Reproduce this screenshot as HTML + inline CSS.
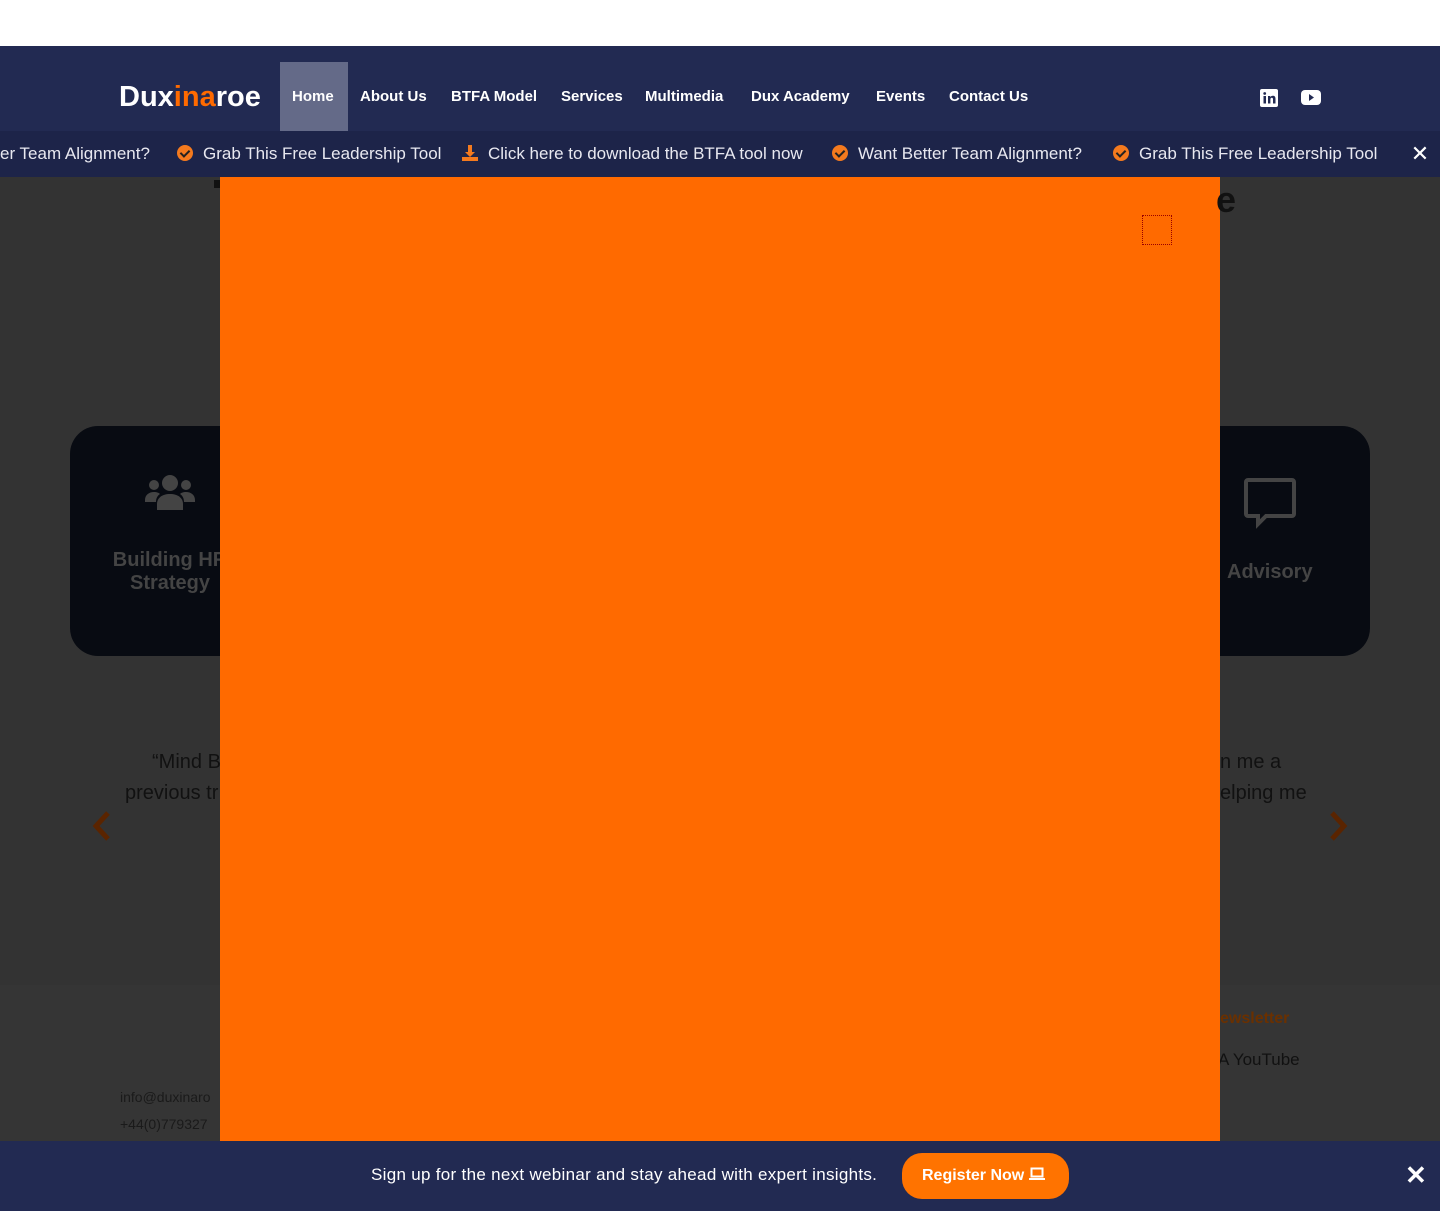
<!DOCTYPE html>
<html><head><meta charset="utf-8"><style>
*{margin:0;padding:0;box-sizing:border-box}
body{width:1440px;height:1211px;overflow:hidden;background:#333;font-family:"Liberation Sans",sans-serif;position:relative}
.a{position:absolute}
.top{left:0;top:0;width:1440px;height:46px;background:#fff}
.nav{left:0;top:46px;width:1440px;height:85px;background:#222a52}
.logo{left:119px;top:81px;font-size:29px;font-weight:bold;color:#fff;letter-spacing:0px}
.logo span{color:#ff6a00}
.home{left:280px;top:62px;width:68px;height:69px;background:#646a88}
.nl{top:88px;color:#fff;font-size:15px;font-weight:bold}
.tick{left:0;top:131px;width:1440px;height:46px;background:#1d2449;color:#e8e8f0;font-size:17px}
.tick .t{position:absolute;top:13px;white-space:nowrap}
.ic{display:inline-block;width:16px;height:16px;border-radius:50%;background:#f47a1e;vertical-align:-2px;margin-right:10px;position:relative}
.ic:after{content:"";position:absolute;left:5px;top:3px;width:4px;height:7px;border:solid #222;border-width:0 2px 2px 0;transform:rotate(45deg)}
.card{top:426px;height:230px;background:#080b12;border-radius:28px}
.ct{color:#444;font-size:20px;font-weight:bold;text-align:center}
.q{color:#111;font-size:20px}
.modal{left:220px;top:177px;width:1000px;height:964px;background:#ff6a00}
.bot{left:0;top:1141px;width:1440px;height:70px;background:#222a52}
</style></head><body>
<div class="a top"></div>
<div class="a" style="left:0;top:985px;width:1440px;height:156px;background:#353535"></div>
<div class="a nav"></div>
<div class="a home"></div>
<div class="a logo">Dux<span>ina</span>roe</div>
<div class="a nl" style="left:292px">Home</div>
<div class="a nl" style="left:360px">About Us</div>
<div class="a nl" style="left:451px">BTFA Model</div>
<div class="a nl" style="left:561px">Services</div>
<div class="a nl" style="left:645px">Multimedia</div>
<div class="a nl" style="left:751px">Dux Academy</div>
<div class="a nl" style="left:876px">Events</div>
<div class="a nl" style="left:949px">Contact Us</div>
<svg class="a" style="left:1260px;top:89px" width="18" height="18" viewBox="0 0 18 18"><rect width="18" height="18" rx="2" fill="#fff"/><rect x="3.5" y="7" width="2.5" height="7.5" fill="#222a52"/><circle cx="4.7" cy="4.5" r="1.4" fill="#222a52"/><path d="M8 7h2.3v1.2c.5-.8 1.4-1.4 2.6-1.4 2 0 2.6 1.3 2.6 3.2v4.5H13v-4c0-1-.2-1.7-1.2-1.7s-1.4.7-1.4 1.7v4H8z" fill="#222a52"/></svg>
<svg class="a" style="left:1301px;top:90px" width="20" height="15" viewBox="0 0 20 15"><rect width="20" height="15" rx="4" fill="#fff"/><path d="M8 4l5 3.5-5 3.5z" fill="#222a52"/></svg>
<div class="a tick">
<div class="t" style="left:0">er Team Alignment?</div>
<div class="t" style="left:177px"><span class="ic"></span>Grab This Free Leadership Tool</div>
<div class="t" style="left:462px"><svg width="16" height="16" viewBox="0 0 16 16" style="vertical-align:-2px;margin-right:10px"><path d="M6 0h4v7h3l-5 5-5-5h3z" fill="#f47a1e"/><rect x="0" y="12" width="16" height="4" fill="#f47a1e"/></svg>Click here to download the BTFA tool now</div>
<div class="t" style="left:832px"><span class="ic"></span>Want Better Team Alignment?</div>
<div class="t" style="left:1113px"><span class="ic"></span>Grab This Free Leadership Tool</div>
<div style="position:absolute;left:1400px;top:0;width:40px;height:46px;background:#1d2449;color:#fff;font-size:22px;text-align:center;line-height:46px">✕</div>
</div>
<div class="a card" style="left:70px;width:300px"></div>
<div class="a card" style="left:1070px;width:300px"></div>
<svg class="a" style="left:145px;top:474px" width="50" height="36" viewBox="0 0 50 36"><circle cx="25" cy="9" r="8" fill="#444"/><circle cx="9" cy="11" r="5" fill="#444"/><circle cx="41" cy="11" r="5" fill="#444"/><path d="M12 36v-6c0-6 5-10 13-10s13 4 13 10v6z" fill="#444"/><path d="M0 26c0-5 4-8 9-8 3 0 5 1 6 2-3 2-4 5-4 8H0z" fill="#444"/><path d="M50 26c0-5-4-8-9-8-3 0-5 1-6 2 3 2 4 5 4 8h11z" fill="#444"/></svg>
<div class="a ct" style="left:70px;top:549px;width:200px">Building HR<br>Strategy</div>
<svg class="a" style="left:1244px;top:478px" width="52" height="52" viewBox="0 0 52 52"><path d="M4 2h44a2 2 0 0 1 2 2v32a2 2 0 0 1-2 2H22l-8 8v-8H4a2 2 0 0 1-2-2V4a2 2 0 0 1 2-2z" fill="none" stroke="#444" stroke-width="4"/></svg>
<div class="a ct" style="left:1227px;top:561px">Advisory</div>
<div class="a q" style="left:152px;top:751px">“Mind B</div>
<div class="a q" style="left:125px;top:782px">previous tr</div>
<div class="a q" style="left:1220px;top:751px">n me a</div>
<div class="a q" style="left:1220px;top:782px">elping me</div>
<svg class="a" style="left:90px;top:810px" width="22" height="32" viewBox="0 0 22 32"><path d="M18 3L6 16l12 13" fill="none" stroke="#5a2400" stroke-width="5"/></svg>
<svg class="a" style="left:1328px;top:810px" width="22" height="32" viewBox="0 0 22 32"><path d="M4 3l12 13L4 29" fill="none" stroke="#5a2400" stroke-width="5"/></svg>
<div class="a" style="left:1220px;top:1010px;color:#6a3000;font-size:16px;font-weight:bold">ewsletter</div>
<div class="a" style="left:1218px;top:1050px;color:#111;font-size:17px">A YouTube</div>
<div class="a" style="left:120px;top:1089px;color:#1a1a1a;font-size:14px">info@duxinaro</div>
<div class="a" style="left:120px;top:1116px;color:#1a1a1a;font-size:14px">+44(0)779327</div>
<div class="a" style="left:214px;top:180px;width:8px;height:8px;background:#111"></div>
<div class="a modal"></div>
<div class="a" style="left:1142px;top:215px;width:30px;height:30px;border:1px dotted #900"></div>
<div class="a" style="left:1216px;top:180px;font-size:36px;font-weight:bold;color:#111;line-height:40px">e</div>
<div class="a bot"></div>
<div class="a" style="left:371px;top:1165px;color:#fff;font-size:17px;letter-spacing:0.3px">Sign up for the next webinar and stay ahead with expert insights.</div>
<div class="a" style="left:902px;top:1153px;width:167px;height:46px;background:#ff7300;border-radius:20px;color:#fff;font-size:16px;font-weight:bold;line-height:46px;padding-left:20px">Register Now <svg width="16" height="14" viewBox="0 0 16 14" style="vertical-align:-1px"><rect x="2.5" y="1.5" width="11" height="8" fill="none" stroke="#fff" stroke-width="2"/><rect x="0" y="11" width="16" height="2" fill="#fff"/></svg></div>
<div class="a" style="left:1405px;top:1160px;color:#fff;font-size:26px;font-weight:bold">✕</div>
</body></html>
